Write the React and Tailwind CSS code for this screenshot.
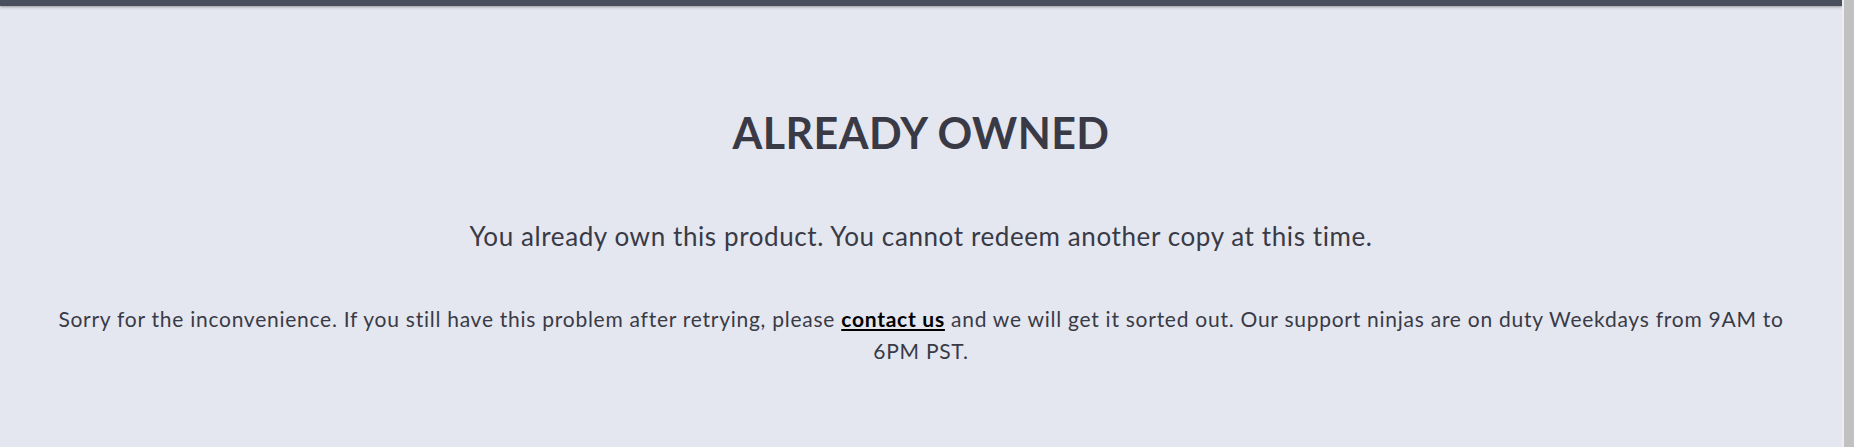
export default function App() {
  return (
    <div className="flex h-[447px] w-[1854px] overflow-hidden bg-[#e4e7ef]" style={{ fontFamily: "Lato, 'Noto Sans', sans-serif" }}>
      <div className="flex min-w-0 flex-1 flex-col">
        <div className="h-[6px] shrink-0 bg-[#4a4f5e] shadow-[0_1px_3px_rgba(0,0,0,0.35)]" />
        <div className="flex flex-col items-center px-[40px] pt-[101px] text-center text-[#393a46]">
          <h1 className="text-[43px] font-bold leading-[52px] tracking-[0.4px]">ALREADY OWNED</h1>
          <p className="mt-[61px] text-[26px] leading-[32px] tracking-[0.6px]">
            You already own this product. You cannot redeem another copy at this time.
          </p>
          <p className="mt-[51px] text-[21px] leading-[32px] tracking-[0.74px]">
            Sorry for the inconvenience. If you still have this problem after retrying, please{" "}
            <a href="#" className="font-bold text-black underline decoration-2 underline-offset-2">contact us</a>{" "}
            and we will get it sorted out. Our support ninjas are on duty Weekdays from 9AM to 6PM PST.
          </p>
        </div>
      </div>
      <div className="flex w-[12px] shrink-0">
        <div className="w-[2px] bg-[#eeeeee]" />
        <div className="flex-1 bg-[#c1c1c1]" />
      </div>
    </div>
  );
}
